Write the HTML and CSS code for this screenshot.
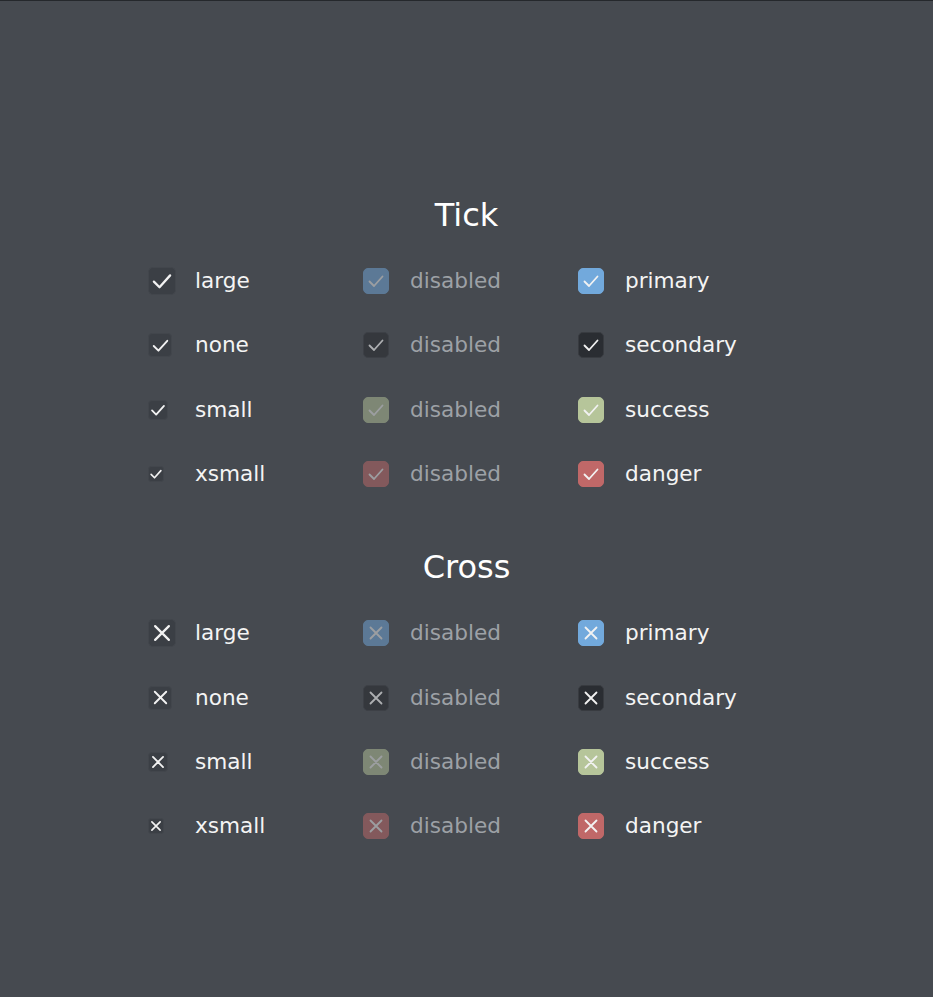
FILE: index.html
```html
<!DOCTYPE html>
<html lang="en">
<head>
<meta charset="utf-8">
<title>Checkboxes</title>
<link rel="stylesheet" href="styles.css">
</head>
<body>
<main class="page">
  <section class="section">
    <h2 class="title">Tick</h2>
    <div class="grid">
      <div class="item"><span class="cb-wrap"><span class="cb default large"><svg viewBox="0 0 24 24"><polyline class="tick" points="5.5,12.5 10,17 18.5,7.5"/></svg></span></span><span class="label">large</span></div>
      <div class="item"><span class="cb-wrap"><span class="cb primary disabled"><svg viewBox="0 0 24 24"><polyline class="tick" points="5.5,12.5 10,17 18.5,7.5"/></svg></span></span><span class="label dim">disabled</span></div>
      <div class="item"><span class="cb-wrap"><span class="cb primary"><svg viewBox="0 0 24 24"><polyline class="tick" points="5.5,12.5 10,17 18.5,7.5"/></svg></span></span><span class="label">primary</span></div>

      <div class="item"><span class="cb-wrap"><span class="cb default none"><svg viewBox="0 0 24 24"><polyline class="tick" points="5.5,12.5 10,17 18.5,7.5"/></svg></span></span><span class="label">none</span></div>
      <div class="item"><span class="cb-wrap"><span class="cb secondary disabled"><svg viewBox="0 0 24 24"><polyline class="tick" points="5.5,12.5 10,17 18.5,7.5"/></svg></span></span><span class="label dim">disabled</span></div>
      <div class="item"><span class="cb-wrap"><span class="cb secondary"><svg viewBox="0 0 24 24"><polyline class="tick" points="5.5,12.5 10,17 18.5,7.5"/></svg></span></span><span class="label">secondary</span></div>

      <div class="item"><span class="cb-wrap"><span class="cb default small"><svg viewBox="0 0 24 24"><polyline class="tick" points="5.5,12.5 10,17 18.5,7.5"/></svg></span></span><span class="label">small</span></div>
      <div class="item"><span class="cb-wrap"><span class="cb success disabled"><svg viewBox="0 0 24 24"><polyline class="tick" points="5.5,12.5 10,17 18.5,7.5"/></svg></span></span><span class="label dim">disabled</span></div>
      <div class="item"><span class="cb-wrap"><span class="cb success"><svg viewBox="0 0 24 24"><polyline class="tick" points="5.5,12.5 10,17 18.5,7.5"/></svg></span></span><span class="label">success</span></div>

      <div class="item"><span class="cb-wrap"><span class="cb default xsmall"><svg viewBox="0 0 24 24"><polyline class="tick" points="5.5,12.5 10,17 18.5,7.5"/></svg></span></span><span class="label">xsmall</span></div>
      <div class="item"><span class="cb-wrap"><span class="cb danger disabled"><svg viewBox="0 0 24 24"><polyline class="tick" points="5.5,12.5 10,17 18.5,7.5"/></svg></span></span><span class="label dim">disabled</span></div>
      <div class="item"><span class="cb-wrap"><span class="cb danger"><svg viewBox="0 0 24 24"><polyline class="tick" points="5.5,12.5 10,17 18.5,7.5"/></svg></span></span><span class="label">danger</span></div>
    </div>
  </section>

  <section class="section">
    <h2 class="title">Cross</h2>
    <div class="grid">
      <div class="item"><span class="cb-wrap"><span class="cb default large"><svg viewBox="0 0 24 24"><path class="cross" d="M6.5 6.5L17.5 17.5M17.5 6.5L6.5 17.5"/></svg></span></span><span class="label">large</span></div>
      <div class="item"><span class="cb-wrap"><span class="cb primary disabled"><svg viewBox="0 0 24 24"><path class="cross" d="M6.5 6.5L17.5 17.5M17.5 6.5L6.5 17.5"/></svg></span></span><span class="label dim">disabled</span></div>
      <div class="item"><span class="cb-wrap"><span class="cb primary"><svg viewBox="0 0 24 24"><path class="cross" d="M6.5 6.5L17.5 17.5M17.5 6.5L6.5 17.5"/></svg></span></span><span class="label">primary</span></div>

      <div class="item"><span class="cb-wrap"><span class="cb default none"><svg viewBox="0 0 24 24"><path class="cross" d="M6.5 6.5L17.5 17.5M17.5 6.5L6.5 17.5"/></svg></span></span><span class="label">none</span></div>
      <div class="item"><span class="cb-wrap"><span class="cb secondary disabled"><svg viewBox="0 0 24 24"><path class="cross" d="M6.5 6.5L17.5 17.5M17.5 6.5L6.5 17.5"/></svg></span></span><span class="label dim">disabled</span></div>
      <div class="item"><span class="cb-wrap"><span class="cb secondary"><svg viewBox="0 0 24 24"><path class="cross" d="M6.5 6.5L17.5 17.5M17.5 6.5L6.5 17.5"/></svg></span></span><span class="label">secondary</span></div>

      <div class="item"><span class="cb-wrap"><span class="cb default small"><svg viewBox="0 0 24 24"><path class="cross" d="M6.5 6.5L17.5 17.5M17.5 6.5L6.5 17.5"/></svg></span></span><span class="label">small</span></div>
      <div class="item"><span class="cb-wrap"><span class="cb success disabled"><svg viewBox="0 0 24 24"><path class="cross" d="M6.5 6.5L17.5 17.5M17.5 6.5L6.5 17.5"/></svg></span></span><span class="label dim">disabled</span></div>
      <div class="item"><span class="cb-wrap"><span class="cb success"><svg viewBox="0 0 24 24"><path class="cross" d="M6.5 6.5L17.5 17.5M17.5 6.5L6.5 17.5"/></svg></span></span><span class="label">success</span></div>

      <div class="item"><span class="cb-wrap"><span class="cb default xsmall"><svg viewBox="0 0 24 24"><path class="cross" d="M6.5 6.5L17.5 17.5M17.5 6.5L6.5 17.5"/></svg></span></span><span class="label">xsmall</span></div>
      <div class="item"><span class="cb-wrap"><span class="cb danger disabled"><svg viewBox="0 0 24 24"><path class="cross" d="M6.5 6.5L17.5 17.5M17.5 6.5L6.5 17.5"/></svg></span></span><span class="label dim">disabled</span></div>
      <div class="item"><span class="cb-wrap"><span class="cb danger"><svg viewBox="0 0 24 24"><path class="cross" d="M6.5 6.5L17.5 17.5M17.5 6.5L6.5 17.5"/></svg></span></span><span class="label">danger</span></div>
    </div>
  </section>
</main>
</body>
</html>
```

FILE: styles.css
```css
html, body {
  margin: 0;
  padding: 0;
  background: #464a50;
}

body {
  min-height: 997px;
  box-sizing: border-box;
  border-top: 1px solid #25282c;
  font-family: "DejaVu Sans", Verdana, sans-serif;
  color: #f4f4f4;
}

.page {
  width: 645px;
  margin: 0 auto;
  padding-top: 194px;
}

.section + .section {
  margin-top: 41px;
}

.title {
  margin: 0 0 14px;
  height: 40px;
  line-height: 40px;
  text-align: center;
  font-size: 32px;
  font-weight: normal;
  color: #ffffff;
}

.grid {
  display: grid;
  grid-template-columns: repeat(3, 215px);
  grid-auto-rows: 64.3px;
}

.item {
  display: flex;
  align-items: center;
  padding-left: 4px;
}

.cb-wrap {
  width: 47px;
  flex: none;
  display: flex;
  align-items: center;
}

.cb {
  box-sizing: border-box;
  display: flex;
  align-items: center;
  justify-content: center;
  width: 26px;
  height: 26px;
  border-radius: 5px;
  border: 1px solid transparent;
  overflow: visible;
}

.cb svg {
  width: 100%;
  height: 100%;
  flex: none;
  display: block;
  overflow: visible;
}

.tick, .cross {
  fill: none;
  stroke: #f2f2f2;
  stroke-width: 1.8;
  stroke-linecap: round;
  stroke-linejoin: round;
}

.default {
  background: #3b3f45;
  border-color: #42464c;
}

.large { width: 28px; height: 28px; border-radius: 5px; }
.none { width: 24px; height: 24px; border-radius: 4px; }
.small { width: 20px; height: 20px; border-radius: 4px; }
.xsmall { width: 16px; height: 16px; border-radius: 3px; }

.large svg { width: 30px; height: 30px; }
.none svg { width: 25px; height: 25px; }
.small svg { width: 22px; height: 22px; }
.xsmall svg { width: 18px; height: 18px; }
.small .tick, .small .cross { stroke-width: 2; }
.xsmall .tick, .xsmall .cross { stroke-width: 2.2; }

.primary { background: #72a9dc; border-color: #72a9dc; }
.secondary { background: #2a2d32; border-color: #383b40; }
.success { background: #b6c59a; border-color: #b6c59a; }
.danger { background: #c06868; border-color: #c06868; }

.disabled { opacity: 0.5; }
.secondary.disabled { opacity: 0.6; }

.label {
  font-size: 21.6px;
  line-height: 26px;
  color: #f4f4f4;
  white-space: nowrap;
}

.label.dim {
  color: #9da1a6;
}
```
